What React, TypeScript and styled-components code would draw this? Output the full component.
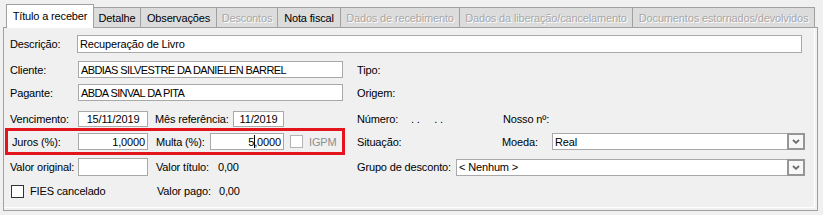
import React from "react";
import styled, { createGlobalStyle } from "styled-components";

const GlobalStyle = createGlobalStyle`
  body {
    margin: 0;
    background: #f0f0f0;
    font-family: "Liberation Sans", Arial, sans-serif;
    font-size: 11px;
    letter-spacing: -0.15px;
    color: #000;
  }
`;

const Window = styled.div`
  width: 823px;
  height: 215px;
  box-sizing: border-box;
  padding: 4px 0 0 3px;
  background: #f0f0f0;
`;

const TabStrip = styled.div`
  display: flex;
  align-items: flex-end;
  height: 23px;
  padding-left: 3px;
`;

const Tab = styled.div<{ $active?: boolean; $disabled?: boolean; $w: number }>`
  position: relative;
  box-sizing: border-box;
  width: ${(p) => p.$w}px;
  height: ${(p) => (p.$active ? 24 : 20)}px;
  margin-bottom: ${(p) => (p.$active ? -1 : 0)}px;
  margin-left: -1px;
  z-index: ${(p) => (p.$active ? 1 : 0)};
  display: flex;
  align-items: center;
  justify-content: center;
  padding-bottom: ${(p) => (p.$active ? 2 : 0)}px;
  border: 1px solid #a0a0a0;
  border-bottom: none;
  background: ${(p) => (p.$active ? "#ffffff" : "#dcdcdc")};
  color: ${(p) => (p.$disabled ? "#a8a8a8" : "#000")};
  text-shadow: ${(p) => (p.$disabled ? "1px 1px 0 #ffffff" : "none")};
  white-space: nowrap;
  &:first-child {
    margin-left: 0;
  }
`;

const Panel = styled.div`
  box-sizing: border-box;
  width: 815px;
  height: 184px;
  border: 1px solid #a0a0a0;
  background: #f0f0f0;
`;

const Sheet = styled.div`
  box-sizing: border-box;
  height: 180px;
  margin-right: 2px;
  border-right: 1px solid #ffffff;
  border-bottom: 1px solid #ffffff;
  padding-top: 7px;
  display: flex;
  flex-direction: column;
`;

const Row = styled.div<{ $h: number; $gap: number }>`
  display: grid;
  grid-template-columns: 353px 1fr;
  align-items: center;
  height: ${(p) => p.$h}px;
  margin-top: ${(p) => p.$gap}px;
`;

const FullRow = styled.div<{ $h: number }>`
  display: flex;
  align-items: center;
  height: ${(p) => p.$h}px;
  padding-left: 6px;
`;

const Left = styled.div<{ $flush?: boolean }>`
  display: flex;
  align-items: center;
  padding-left: ${(p) => (p.$flush ? 0 : 6)}px;
  height: 100%;
`;

const Right = styled.div`
  display: flex;
  align-items: center;
  height: 100%;
`;

const RedBox = styled.div`
  box-sizing: border-box;
  display: flex;
  align-items: center;
  width: 340px;
  height: 27px;
  margin-left: 1px;
  padding-left: 4px;
  border: 3px solid #e3141e;
`;

const Label = styled.span<{ $w?: number; $pl?: number; $muted?: boolean; $pre?: boolean }>`
  flex: none;
  box-sizing: border-box;
  width: ${(p) => (p.$w ? `${p.$w}px` : "auto")};
  padding-left: ${(p) => p.$pl ?? 0}px;
  color: ${(p) => (p.$muted ? "#8d8d8d" : "#000")};
  white-space: ${(p) => (p.$pre ? "pre" : "nowrap")};
`;

const Field = styled.div<{ $w: number; $h?: number; $align?: string; $caps?: boolean }>`
  flex: none;
  box-sizing: border-box;
  width: ${(p) => p.$w}px;
  height: ${(p) => p.$h ?? 17}px;
  display: flex;
  align-items: center;
  justify-content: ${(p) => p.$align ?? "flex-start"};
  padding: 0 2px;
  background: #ffffff;
  border: 1px solid #a9a9a9;
  letter-spacing: ${(p) => (p.$caps ? "-0.6px" : "-0.15px")};
  white-space: nowrap;
  overflow: hidden;
`;

const Caret = styled.span`
  display: inline-block;
  width: 1px;
  height: 13px;
  margin-right: -1px;
  background: #000;
`;

const Select = styled.div<{ $w: number }>`
  flex: none;
  box-sizing: border-box;
  width: ${(p) => p.$w}px;
  height: 17px;
  display: flex;
  align-items: center;
  background: #ffffff;
  border: 1px solid #a9a9a9;
  padding-left: 2px;
`;

const SelectText = styled.span`
  flex: 1;
  white-space: nowrap;
`;

const DropButton = styled.div`
  box-sizing: border-box;
  width: 18px;
  height: 17px;
  margin: -1px -1px -1px 0;
  display: flex;
  align-items: center;
  justify-content: center;
  border: 2px solid #969696;
  background: #f7f7f7;
`;

const Check = styled.span<{ $disabled?: boolean; $ml?: number }>`
  flex: none;
  box-sizing: border-box;
  width: 13px;
  height: 13px;
  margin-left: ${(p) => p.$ml ?? 0}px;
  margin-right: 6px;
  background: #ffffff;
  border: 1px solid ${(p) => (p.$disabled ? "#b4b4b4" : "#333333")};
`;

const Chevron = () => (
  <svg width="8" height="5" viewBox="0 0 8 5">
    <polyline points="1,1 4,3.8 7,1" fill="none" stroke="#6a6a6a" strokeWidth="1.8" />
  </svg>
);

const tabs = [
  { label: "Título a receber", w: 88, active: true },
  { label: "Detalhe", w: 48 },
  { label: "Observações", w: 77 },
  { label: "Descontos", w: 62, disabled: true },
  { label: "Nota fiscal", w: 64 },
  { label: "Dados de recebimento", w: 120, disabled: true },
  { label: "Dados da liberação/cancelamento", w: 174, disabled: true },
  { label: "Documentos estornados/devolvidos", w: 183, disabled: true },
];

const App = () => {
  return (
    <>
      <GlobalStyle />
      <Window>
        <TabStrip>
          {tabs.map((t) => (
            <Tab key={t.label} $w={t.w} $active={t.active} $disabled={t.disabled}>
              {t.label}
            </Tab>
          ))}
        </TabStrip>
        <Panel>
          <Sheet>
            <FullRow $h={18}>
              <Label $w={67}>Descrição:</Label>
              <Field $w={725} $h={18}>
                Recuperação de Livro
              </Field>
            </FullRow>

            <Row $h={17} $gap={8}>
              <Left>
                <Label $w={68}>Cliente:</Label>
                <Field $w={265} $caps>
                  ABDIAS SILVESTRE DA DANIELEN BARREL
                </Field>
              </Left>
              <Right>
                <Label>Tipo:</Label>
              </Right>
            </Row>

            <Row $h={17} $gap={6}>
              <Left>
                <Label $w={68}>Pagante:</Label>
                <Field $w={265} $caps>
                  ABDA SINVAL DA PITA
                </Field>
              </Left>
              <Right>
                <Label>Origem:</Label>
              </Right>
            </Row>

            <Row $h={16} $gap={10}>
              <Left>
                <Label $w={68}>Vencimento:</Label>
                <Field $w={70} $h={16} $align="center">
                  15/11/2019
                </Field>
                <Label $w={85} $pl={7}>
                  Mês referência:
                </Label>
                <Field $w={51} $h={16} $align="center">
                  11/2019
                </Field>
              </Left>
              <Right>
                <Label $w={54}>Número:</Label>
                <Label $w={92} $pre>
                  {". .     . ."}
                </Label>
                <Label>Nosso nº:</Label>
              </Right>
            </Row>

            <Row $h={27} $gap={1}>
              <Left $flush>
                <RedBox>
                  <Label $w={66}>Juros (%):</Label>
                  <Field $w={70} $align="flex-end">
                    1,0000
                  </Field>
                  <Label $w={62} $pl={8}>
                    Multa (%):
                  </Label>
                  <Field $w={74} $align="flex-end">
                    5<Caret />,0000
                  </Field>
                  <Check $disabled $ml={6} />
                  <Label $muted>IGPM</Label>
                </RedBox>
              </Left>
              <Right>
                <Label $w={145}>Situação:</Label>
                <Label $w={50}>Moeda:</Label>
                <Select $w={253}>
                  <SelectText>Real</SelectText>
                  <DropButton>
                    <Chevron />
                  </DropButton>
                </Select>
              </Right>
            </Row>

            <Row $h={18} $gap={3}>
              <Left>
                <Label $w={68}>Valor original:</Label>
                <Field $w={70} $h={18} />
                <Label $w={70} $pl={8}>
                  Valor título:
                </Label>
                <Label>0,00</Label>
              </Left>
              <Right>
                <Label $w={99}>Grupo de desconto:</Label>
                <Select $w={349}>
                  <SelectText>&lt; Nenhum &gt;</SelectText>
                  <DropButton>
                    <Chevron />
                  </DropButton>
                </Select>
              </Right>
            </Row>

            <Row $h={14} $gap={8}>
              <Left>
                <Check $ml={1} />
                <Label $w={119}>FIES cancelado</Label>
                <Label $w={70} $pl={8}>
                  Valor pago:
                </Label>
                <Label>0,00</Label>
              </Left>
              <Right />
            </Row>
          </Sheet>
        </Panel>
      </Window>
    </>
  );
};

export default App;
